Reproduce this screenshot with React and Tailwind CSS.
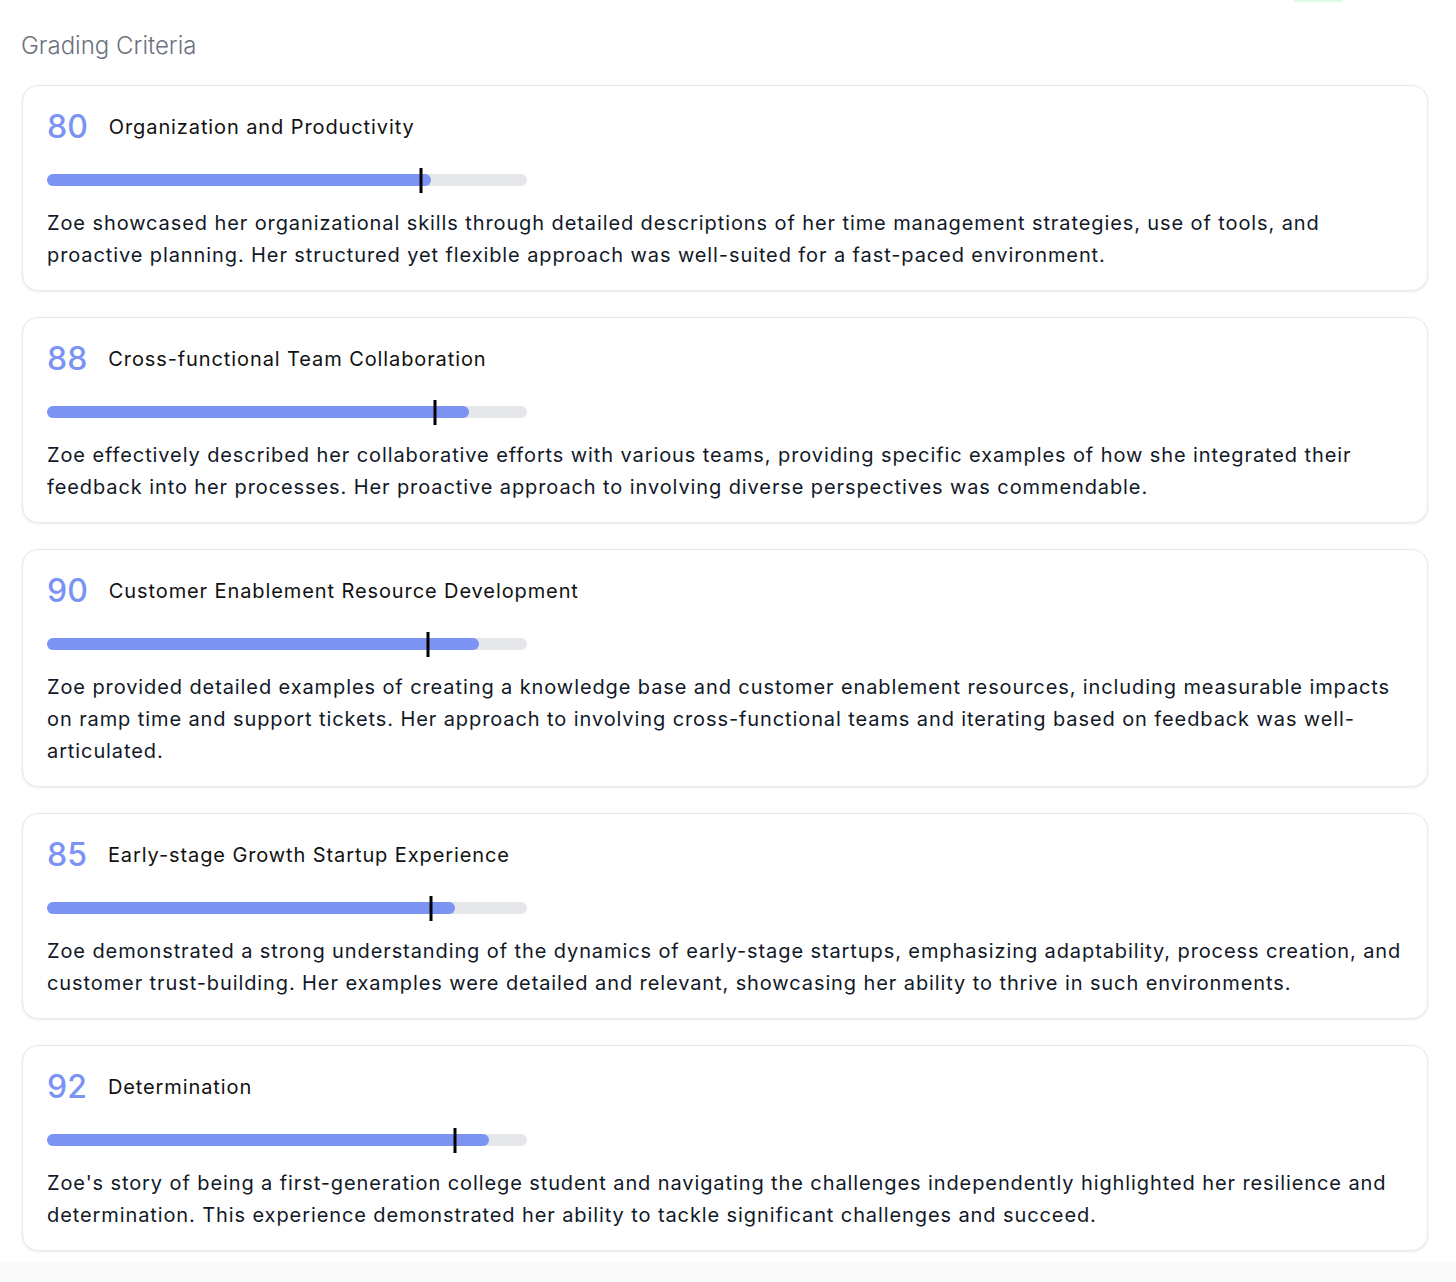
const criteria = [
    {
        score: 80,
        marker: 78,
        title: 'Organization and Productivity',
        text: 'Zoe showcased her organizational skills through detailed descriptions of her time management strategies, use of tools, and proactive planning. Her structured yet flexible approach was well-suited for a fast-paced environment.',
    },
    {
        score: 88,
        marker: 80.8,
        title: 'Cross-functional Team Collaboration',
        text: 'Zoe effectively described her collaborative efforts with various teams, providing specific examples of how she integrated their feedback into her processes. Her proactive approach to involving diverse perspectives was commendable.',
    },
    {
        score: 90,
        marker: 79.4,
        title: 'Customer Enablement Resource Development',
        text: 'Zoe provided detailed examples of creating a knowledge base and customer enablement resources, including measurable impacts on ramp time and support tickets. Her approach to involving cross-functional teams and iterating based on feedback was well-articulated.',
    },
    {
        score: 85,
        marker: 80,
        title: 'Early-stage Growth Startup Experience',
        text: 'Zoe demonstrated a strong understanding of the dynamics of early-stage startups, emphasizing adaptability, process creation, and customer trust-building. Her examples were detailed and relevant, showcasing her ability to thrive in such environments.',
    },
    {
        score: 92,
        marker: 85,
        title: 'Determination',
        text: "Zoe's story of being a first-generation college student and navigating the challenges independently highlighted her resilience and determination. This experience demonstrated her ability to tackle significant challenges and succeed.",
    },
];

const ScoreBar = ({ score, marker }) => (
    <div className="relative mt-[29px] h-3 w-[480px] rounded-full bg-[#e5e7eb]">
        <div className="h-3 rounded-full bg-[#7b94f4]" style={{ width: `${score}%` }} />
        <div
            className="absolute top-[-6px] h-[25px] w-[3px] -translate-x-1/2 bg-black"
            style={{ left: `${marker}%` }}
        />
    </div>
);

const CriteriaCard = ({ item }) => (
    <div className="rounded-2xl border border-[#e6e8ef] bg-white px-6 pt-[23px] pb-[19px] shadow-[0_1px_3px_rgba(0,0,0,0.08)]">
        <div className="flex items-center gap-[21px]">
            <span className="text-[32px] leading-9 font-[450] text-[#7b94f4]">{item.score}</span>
            <h3 className="text-xl tracking-[0.045em] text-[#111111]">{item.title}</h3>
        </div>
        <ScoreBar score={item.score} marker={item.marker} />
        <p className="mt-[21px] text-xl leading-8 tracking-[0.045em] text-[#111827]">{item.text}</p>
    </div>
);

export default function App() {
    return (
        <div className="min-h-[1282px] bg-[#fafafa]" style={{ fontFamily: 'Inter, "Noto Sans", sans-serif' }}>
            <div className="bg-white pl-[22px] pr-[28px] pb-[11px]">
                <div className="ml-[1271px] h-[2px] w-[50px] rounded-b bg-[#dcfce7]" />
                <h2 className="mt-[28px] mb-[23px] -ml-px text-2xl font-light text-[#6b7280]">Grading Criteria</h2>
                <div className="flex flex-col gap-[26px]">
                    {criteria.map((item) => (
                        <CriteriaCard key={item.title} item={item} />
                    ))}
                </div>
            </div>
        </div>
    );
}
